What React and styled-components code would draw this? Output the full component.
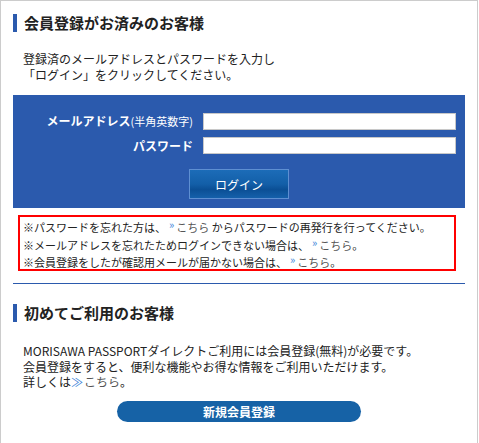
import React from "react";
import styled, { createGlobalStyle } from "styled-components";

const Global = createGlobalStyle`
  html, body { margin: 0; padding: 0; background: #fff; }
  body { font-family: "Noto Sans CJK JP", "Noto Sans", sans-serif; color: #222; }
`;

const Frame = styled.div`
  box-sizing: border-box;
  width: 478px;
  height: 443px;
  border: 1px solid #cccccc;
  border-bottom: none;
  padding: 13px 12px 0;
`;

const Heading = styled.h2`
  margin: ${(p) => p.$mt || 0}px 0 0;
  border-left: 4px solid #2b5aad;
  padding-left: 7px;
  height: 18px;
  font-size: 15px;
  line-height: 18px;
  font-weight: bold;
  color: #222;
`;

const Text = styled.p`
  margin: ${(p) => p.$mt || 0}px 0 0;
  padding-left: 10px;
  font-size: 12px;
  line-height: 15.5px;
  color: #222;
`;

const Panel = styled.div`
  margin-top: 13px;
  background: #2b5aad;
  padding: 17px 0 9px;
  display: flex;
  flex-direction: column;
  align-items: center;
`;

const Row = styled.div`
  display: flex;
  align-items: center;
  width: 100%;
  margin-bottom: 7px;
`;

const Label = styled.label`
  width: 180px;
  text-align: right;
  color: #fff;
  font-weight: bold;
  font-size: 12px;
  line-height: 17px;
  white-space: nowrap;
`;

const Small = styled.span`
  font-size: 11px;
  font-weight: normal;
`;

const Input = styled.input`
  box-sizing: border-box;
  margin-left: 10px;
  width: 253px;
  height: 17px;
  border: 1px solid #c8c8c8;
  background: #fff;
  padding: 0 2px;
  outline: none;
`;

const LoginButton = styled.button`
  margin-top: 8px;
  box-sizing: border-box;
  width: 100px;
  height: 30px;
  border: 1px solid #5e8fd2;
  background: linear-gradient(#1c6cb8, #135fa8 50%, #0b4f95 70%, #1560aa);
  color: #fff;
  font-family: inherit;
  font-size: 12px;
  cursor: pointer;
`;

const Notice = styled.div`
  box-sizing: border-box;
  margin: 7px 0 0 5px;
  width: 438px;
  height: 56px;
  border: 2px solid #ff0000;
  padding: 2px 0 0 3px;
  font-size: 11px;
  line-height: 17.5px;
  color: #222;
`;

const Line = styled.div`
  white-space: nowrap;
  height: 17.5px;
`;

const Link = styled.a`
  color: #555;
  text-decoration: none;
  &::before {
    content: "${(p) => (p.$big ? "≫" : "»")}";
    color: #3a7fd8;
    display: inline-block;
    line-height: 0;
    margin: ${(p) => (p.$big ? "0 1px 0 0" : "0 2px 0 3px")};
    font-size: ${(p) => (p.$big ? "12px" : "11px")};
    transform: translateY(${(p) => (p.$big ? "0" : "-3px")});
  }
`;

const Divider = styled.hr`
  margin: 12px 0 0;
  border: none;
  border-top: 1px solid #2b5aad;
`;

const Center = styled.div`
  display: flex;
  justify-content: center;
  margin-top: 11px;
`;

const RegisterButton = styled.button`
  width: 244px;
  height: 21px;
  border: none;
  border-radius: 11px;
  background: #1662a6;
  color: #fff;
  font-family: inherit;
  font-weight: bold;
  font-size: 12px;
  line-height: 21px;
  padding: 0;
  cursor: pointer;
`;

export default function App() {
  return (
    <>
      <Global />
      <Frame>
        <Heading>会員登録がお済みのお客様</Heading>
        <Text $mt={19}>
          登録済のメールアドレスとパスワードを入力し
          <br />
          「ログイン」をクリックしてください。
        </Text>
        <Panel>
          <Row>
            <Label>
              メールアドレス<Small>(半角英数字)</Small>
            </Label>
            <Input type="text" />
          </Row>
          <Row>
            <Label>パスワード</Label>
            <Input type="password" />
          </Row>
          <LoginButton>ログイン</LoginButton>
        </Panel>
        <Notice>
          <Line>
            ※パスワードを忘れた方は、<Link>こちら</Link> からパスワードの再発行を行ってください。
          </Line>
          <Line>
            ※メールアドレスを忘れたためログインできない場合は、<Link>こちら</Link>。
          </Line>
          <Line>
            ※会員登録をしたが確認用メールが届かない場合は、<Link>こちら</Link>。
          </Line>
        </Notice>
        <Divider />
        <Heading $mt={20}>初めてご利用のお客様</Heading>
        <Text $mt={21}>
          MORISAWA PASSPORTダイレクトご利用には会員登録(無料)が必要です。
          <br />
          会員登録をすると、便利な機能やお得な情報をご利用いただけます。
          <br />
          詳しくは<Link $big>こちら</Link>。
        </Text>
        <Center>
          <RegisterButton>新規会員登録</RegisterButton>
        </Center>
      </Frame>
    </>
  );
}
